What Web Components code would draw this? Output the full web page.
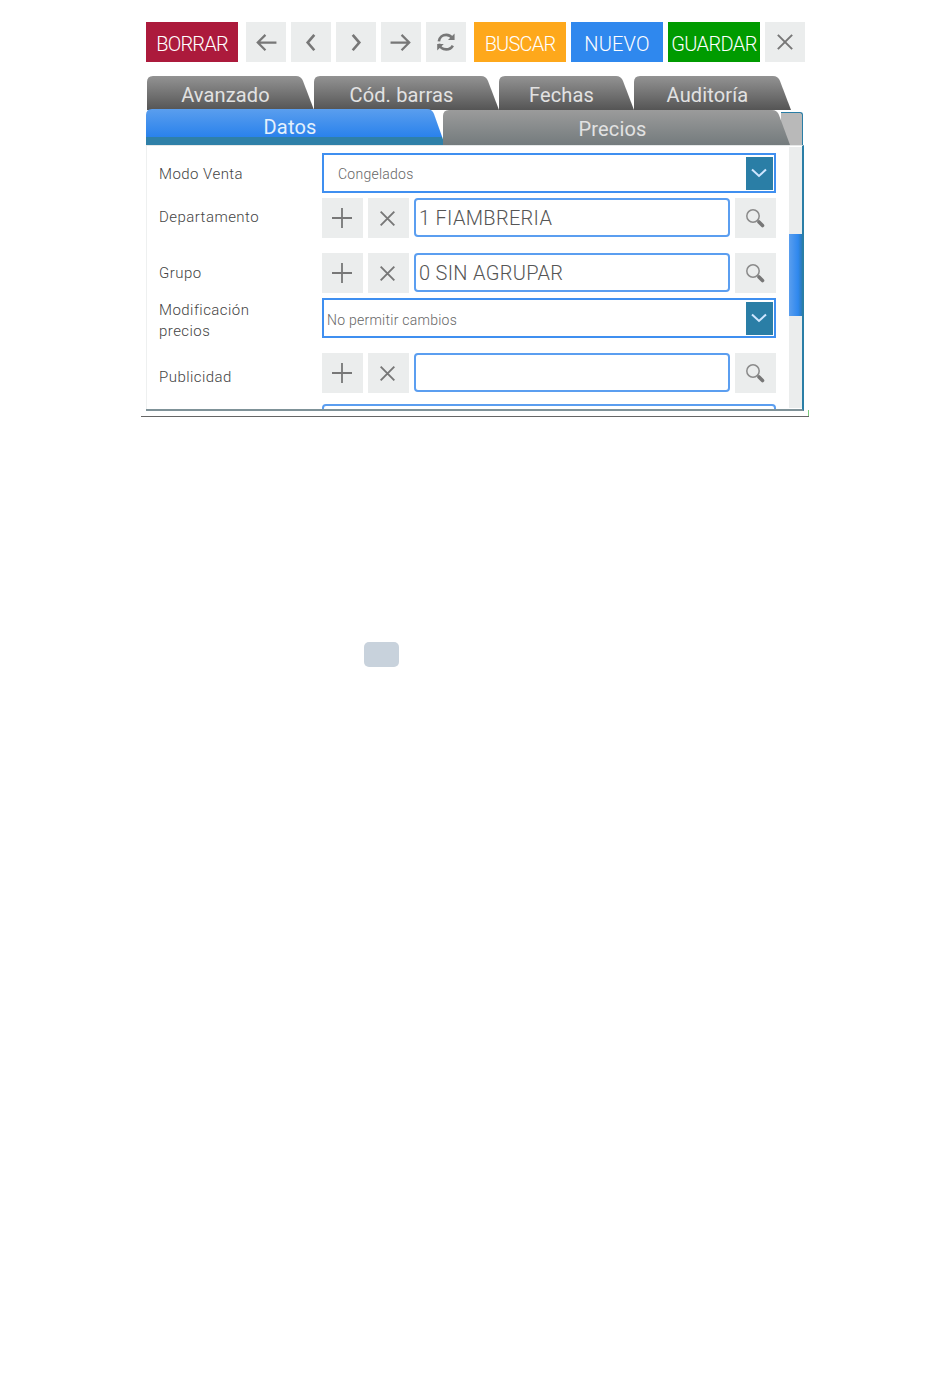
<!DOCTYPE html>
<html lang="es">
<head>
<meta charset="utf-8">
<title>Artículo</title>
<style>
html, body { margin: 0; background: #fff; }
body { height: 1379px; font-family: Roboto, "Liberation Sans", sans-serif; }
</style>
</head>
<body>
<app-frame>
    <app-toolbar>
        <text-button color="#ac1a3c" spacing="-.8">BORRAR</text-button>
        <icon-button icon="back" class="first"></icon-button>
        <icon-button icon="prev"></icon-button>
        <icon-button icon="next"></icon-button>
        <icon-button icon="forward"></icon-button>
        <icon-button icon="reload"></icon-button>
        <text-button color="#fea81b" class="first" spacing="-.8">BUSCAR</text-button>
        <text-button color="#2f88ee" spacing=".2">NUEVO</text-button>
        <text-button color="#009b00" spacing="-.6">GUARDAR</text-button>
        <icon-button icon="close"></icon-button>
    </app-toolbar>
    <tab-strip>
        <tab-item slot="back" width="167">Avanzado</tab-item>
        <tab-item slot="back" width="185">Cód. barras</tab-item>
        <tab-item slot="back" width="135">Fechas</tab-item>
        <tab-item slot="back" width="157">Auditoría</tab-item>
        <tab-item slot="front" width="299" active>Datos</tab-item>
        <tab-item slot="front" width="347" light>Precios</tab-item>
    </tab-strip>
    <form-panel>
        <form-row label="Modo Venta" top="7" nudge="1"><select-field indent="14" drop="1">Congelados</select-field></form-row>
        <form-row label="Departamento" top="5" nudge="-1"><lookup-field value="1 FIAMBRERIA"></lookup-field></form-row>
        <form-row label="Grupo" top="15" nudge="0"><lookup-field value="0 SIN AGRUPAR"></lookup-field></form-row>
        <form-row label="Modificación precios" top="5" nudge="2"><select-field indent="3" drop="2">No permitir cambios</select-field></form-row>
        <form-row label="Publicidad" top="15" nudge="4"><lookup-field value=""></lookup-field></form-row>
        <form-row label="" top="11"><lookup-field value="" wide></lookup-field></form-row>
    </form-panel>
</app-frame>
<drag-handle></drag-handle>

<script>
const ICONS = {
    back: '<path d="M19.5 10.5H2.5M9.5 3.5l-7 7 7 7" stroke-width="2"/>',
    forward: '<path d="M.5 10.5h17M10.5 3.5l7 7-7 7" stroke-width="2"/>',
    prev: '<path d="M13 3.5l-6 7 6 7" stroke-width="2.4"/>',
    next: '<path d="M7 3.5l6 7-6 7" stroke-width="2.4"/>',
    reload: '<path d="M3.5 9.5C4 5.5 7 3.5 10.2 3.5c2.6 0 4.4 1.2 5.6 3M3.6 11.6c1 3.5 3.6 5.1 6.6 5.1 2.6 0 4.8-1.3 6-3.5" stroke-width="2.4"/><path d="M17.8 2.2v6h-6zM2 17.8v-6h6z" fill="#777" stroke="none"/>',
    close: '<path d="M3.5 3.5l13 13M16.5 3.5l-13 13" stroke-width="1.8"/>',
    plus: '<path d="M10 0v20M0 10h20" stroke-width="1.8"/>',
    search: '<circle cx="8" cy="8" r="6.2" stroke-width="1.5" stroke="#8a8a8a"/><path d="M14 14l3.5 3.5" stroke-width="3.6" stroke-linecap="round"/>'
};

function icon(name, size) {
    return `<svg width="${size}" height="${size}" viewBox="0 0 20 20" fill="none" stroke="#777">${ICONS[name]}</svg>`;
}

class AppFrame extends HTMLElement {
    constructor() {
        super();
        this.attachShadow({mode: 'open'}).innerHTML = `
<style>
:host { display: block; position: relative; box-sizing: border-box; width: 668px; height: 417px; margin-left: 141px; padding: 22px 0 0 5px; border-bottom: 1px solid #666; }
i { position: absolute; right: 0; bottom: 0; width: 1px; height: 6px; background: #7ccb7c; }
</style>
<slot></slot><i></i>`;
    }
}

class AppToolbar extends HTMLElement {
    constructor() {
        super();
        this.attachShadow({mode: 'open'}).innerHTML = `
<style>
:host { display: flex; gap: 5px; height: 40px; }
::slotted(.first) { margin-left: 3px; }
</style>
<slot></slot>`;
    }
}

class TextButton extends HTMLElement {
    constructor() {
        super();
        this.attachShadow({mode: 'open'}).innerHTML = `
<style>
:host { display: flex; align-items: center; justify-content: center; width: 92px; height: 40px; color: #fff; font: 300 20px/40px Roboto, sans-serif; padding-top: 3px; box-sizing: border-box; }
</style>
<slot></slot>`;
    }
    connectedCallback() {
        this.style.background = this.getAttribute('color');
        this.style.letterSpacing = this.getAttribute('spacing') + 'px';
    }
}

class IconButton extends HTMLElement {
    constructor() {
        super();
        this.attachShadow({mode: 'open'});
    }
    connectedCallback() {
        let size = Number(this.getAttribute('size')) || 22;
        this.shadowRoot.innerHTML = `
<style>
:host { display: flex; align-items: center; justify-content: center; flex: none; width: var(--w, 40px); height: 40px; background: #ebeded; }
svg { display: block; margin-right: var(--shift, 0); }
</style>
${icon(this.getAttribute('icon'), size)}`;
    }
}

class TabStrip extends HTMLElement {
    constructor() {
        super();
        this.attachShadow({mode: 'open'}).innerHTML = `
<style>
:host { display: block; position: relative; margin-top: 14px; height: 69px; }
#back { display: flex; height: 34px; padding-left: 1px; }
#front { display: flex; position: relative; margin-top: -1px; height: 36px; }
#front ::slotted(:last-child) { margin-left: -2px; }
#edge { position: absolute; left: 635px; bottom: 0; width: 22px; height: 33px; background: #b9b9b9; border: solid #2a7ea6; border-width: 1px 1px 0 0; border-top-right-radius: 3px; box-sizing: border-box; }
</style>
<div id="back"><slot name="back"></slot></div>
<div id="edge"></div>
<div id="front"><slot name="front"></slot></div>`;
    }
}

class TabItem extends HTMLElement {
    constructor() {
        super();
        this.attachShadow({mode: 'open'}).innerHTML = `
<style>
:host { display: flex; flex: none; position: relative; align-items: center; justify-content: center; box-sizing: border-box; height: 100%; padding: 4px 10px 0 0; color: #e2e2e2; font: 400 20px Roboto, sans-serif; letter-spacing: .15px;
    background: linear-gradient(#939393, #555);
    clip-path: path(var(--shape)); }
:host([active]) { color: #e4f0fc; padding: 0 11px 0 0; background: linear-gradient(#5a9eee 0, #2a82ec 28px, #2f80a8 28px, #2f80a8 100%); }
:host([light]) { padding: 4px 8px 0 0; background: linear-gradient(#9c9c9c, #747b7d); }
</style>
<slot></slot>`;
    }
    connectedCallback() {
        let w = Number(this.getAttribute('width'));
        let h = this.getAttribute('slot') == 'front' ? 36 : 34;
        let t = this.hasAttribute('light') ? 1 : 0;
        this.style.width = w + 'px';
        this.style.setProperty('--shape', `"M0 ${h}V${t+6}Q0 ${t} 6 ${t}H${w-18}Q${w-13} ${t} ${w-11} ${t+5}L${w} ${h}Z"`);
    }
}

class FormPanel extends HTMLElement {
    constructor() {
        super();
        this.attachShadow({mode: 'open'}).innerHTML = `
<style>
:host { display: block; position: relative; box-sizing: border-box; width: 658px; height: 266px; border-top: 1px solid #e6e8e8; border-right: 2px solid #2a7ea6; border-bottom: 2px solid #7f9298; box-shadow: inset 1px 0 0 #eef0f0; overflow: hidden; padding-left: 13px; }
#bar { position: absolute; top: 1px; right: 0; width: 13px; height: 261px; background: #ebeded; }
#thumb { position: absolute; top: 87px; left: 0; width: 100%; height: 82px; background: linear-gradient(90deg, #5a9eee, #2f88ee 70%, #2a7ab8); }
</style>
<slot></slot>
<div id="bar"><div id="thumb"></div></div>`;
    }
}

class FormRow extends HTMLElement {
    constructor() {
        super();
        this.attachShadow({mode: 'open'});
    }
    connectedCallback() {
        let nudge = Number(this.getAttribute('nudge')) || 0;
        this.shadowRoot.innerHTML = `
<style>
:host { display: grid; grid-template-columns: 163px 454px; height: 40px; margin-top: ${this.getAttribute('top')}px; }
label { align-self: center; position: relative; top: ${nudge}px; width: 110px; color: #444; font: 300 15px/21px Roboto, sans-serif; letter-spacing: .45px; }
</style>
<label>${this.getAttribute('label')}</label>
<slot></slot>`;
    }
}

class SelectField extends HTMLElement {
    constructor() {
        super();
        this.attachShadow({mode: 'open'});
    }
    connectedCallback() {
        this.shadowRoot.innerHTML = `
<style>
:host { display: flex; align-items: center; box-sizing: border-box; height: 40px; padding: 1px 1px 1px ${this.getAttribute('indent')}px; border: 2px solid #3f8ff0; background: #fff; color: #666; font: 300 14px Roboto, sans-serif; letter-spacing: .25px; }
span { flex: 1; padding-top: ${this.getAttribute('drop') * 2}px; }
b { display: flex; align-items: center; justify-content: center; width: 27px; height: 33px; background: #2a7ea6; }
svg { margin-right: 1px; }
</style>
<span><slot></slot></span>
<b><svg width="16" height="10" viewBox="0 0 16 10" fill="none" stroke="#cfe6ff" stroke-width="2"><path d="M1 1.5l7 6.5 7-6.5"/></svg></b>`;
    }
}

class LookupField extends HTMLElement {
    constructor() {
        super();
        this.attachShadow({mode: 'open'});
    }
    connectedCallback() {
        this.shadowRoot.innerHTML = `
<style>
:host { display: flex; gap: 5px; height: 40px; --w: 41px; --shift: 2px; }
output { box-sizing: border-box; flex: none; width: 316px; height: 39px; padding-left: 3px; border: 2px solid #5b9ef0; border-radius: 4px; background: #fff; color: #555; font: 300 20px/37px Roboto, sans-serif; letter-spacing: .3px; white-space: nowrap; }
:host([wide]) output { width: 454px; }
</style>
${this.hasAttribute('wide') ? '' : `<icon-button icon="plus" size="20"></icon-button><icon-button icon="close" size="21"></icon-button>`}
<output>${this.getAttribute('value')}</output>
${this.hasAttribute('wide') ? '' : `<icon-button icon="search" size="20"></icon-button>`}`;
    }
}

class DragHandle extends HTMLElement {
    constructor() {
        super();
        this.attachShadow({mode: 'open'}).innerHTML = `
<style>
:host { display: block; position: absolute; left: 364px; top: 642px; width: 35px; height: 25px; border-radius: 5px; background: #c8d2dc; }
</style>`;
    }
}

customElements.define('app-frame', AppFrame);
customElements.define('app-toolbar', AppToolbar);
customElements.define('text-button', TextButton);
customElements.define('icon-button', IconButton);
customElements.define('tab-strip', TabStrip);
customElements.define('tab-item', TabItem);
customElements.define('form-panel', FormPanel);
customElements.define('form-row', FormRow);
customElements.define('select-field', SelectField);
customElements.define('lookup-field', LookupField);
customElements.define('drag-handle', DragHandle);
</script>
</body>
</html>
